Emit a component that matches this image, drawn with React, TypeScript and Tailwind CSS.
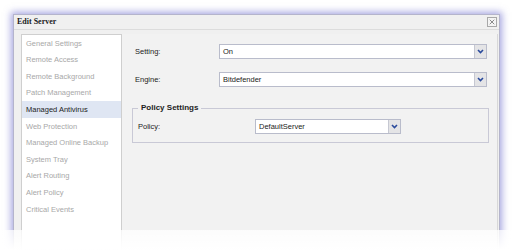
import { X } from "lucide-react";

const navItems = [
  "General Settings",
  "Remote Access",
  "Remote Background",
  "Patch Management",
  "Managed Antivirus",
  "Web Protection",
  "Managed Online Backup",
  "System Tray",
  "Alert Routing",
  "Alert Policy",
  "Critical Events",
];

function Chevron() {
  return (
    <svg width="7" height="5" viewBox="0 0 7 5" aria-hidden>
      <path d="M1 1 3.5 3.5 6 1" fill="none" stroke="#2a4a9c" strokeWidth={1.6} />
    </svg>
  );
}

function Select({ value, className }: { value: string; className: string }) {
  return (
    <div
      className={`flex h-[15px] items-stretch border border-[#b9bccb] bg-white ${className}`}
    >
      <div className="flex flex-1 items-center pl-[3px] text-[7.5px] text-[#222]">
        {value}
      </div>
      <div className="flex w-[12px] items-center justify-center border-l border-[#c6c8d2] bg-[#e4e4e6]">
        <Chevron />
      </div>
    </div>
  );
}

export default function App() {
  return (
    <div
      className="relative h-[250px] w-[512px] overflow-hidden bg-white pl-[13px] pt-[14px]"
      style={{ fontFamily: '"Liberation Sans", Arial, sans-serif' }}
    >
      <div className="flex h-[236px] w-[487px] flex-col border border-[#b4b4cc] bg-[#f0f0f0] shadow-[0_0_7px_2px_rgba(95,95,200,0.55)]">
        <div className="flex h-[15px] items-center justify-between border-b border-[#dcdcdc] pl-[3px] pr-[2px]">
          <span
            className="text-[8px] font-bold text-[#222]"
            style={{ fontFamily: '"Liberation Serif", "DejaVu Serif", serif' }}
          >
            Edit Server
          </span>
          <div className="flex h-[10px] w-[10px] items-center justify-center border border-[#a8a8a8] bg-[#f4f4f4]">
            <X className="h-[8px] w-[8px] text-[#555]" strokeWidth={2} />
          </div>
        </div>
        <div className="flex flex-1 pl-[7px] pr-[1px] pt-[4px]">
          <div className="flex flex-1 border-r border-[#d8d8d8]">
            <div className="flex w-[101px] flex-col border border-b-0 border-[#cfcfcf] bg-white">
              {navItems.map((item) => (
                <div
                  key={item}
                  className={`flex h-[16.6px] items-center pl-[4px] text-[7.5px] ${
                    item === "Managed Antivirus"
                      ? "bg-[#dfe6f3] text-[#222]"
                      : "text-[#a8a8a8]"
                  }`}
                >
                  {item}
                </div>
              ))}
            </div>
            <div className="flex flex-1 flex-col bg-[#f2f2f2] pl-[10px] pr-[8px] pt-[10px] text-[7.5px] text-[#222]">
              <div className="flex h-[15px] items-center">
                <span className="ml-[3px] w-[84px]">Setting:</span>
                <Select value="On" className="w-[268px]" />
              </div>
              <div className="mt-[13px] flex h-[15px] items-center">
                <span className="ml-[3px] w-[84px]">Engine:</span>
                <Select value="Bitdefender" className="w-[268px]" />
              </div>
              <fieldset className="mt-[15px] h-[41px] border border-[#c9c9d6] px-[5px]">
                <legend className="px-[3px] text-[8px] font-bold">Policy Settings</legend>
                <div className="mt-[5px] flex h-[15px] items-center">
                  <span className="w-[117px]">Policy:</span>
                  <Select value="DefaultServer" className="w-[146px]" />
                </div>
              </fieldset>
            </div>
          </div>
        </div>
      </div>
      <div className="absolute left-0 right-0 top-[230px] h-[20px] bg-gradient-to-b from-white/75 to-white" />
    </div>
  );
}
